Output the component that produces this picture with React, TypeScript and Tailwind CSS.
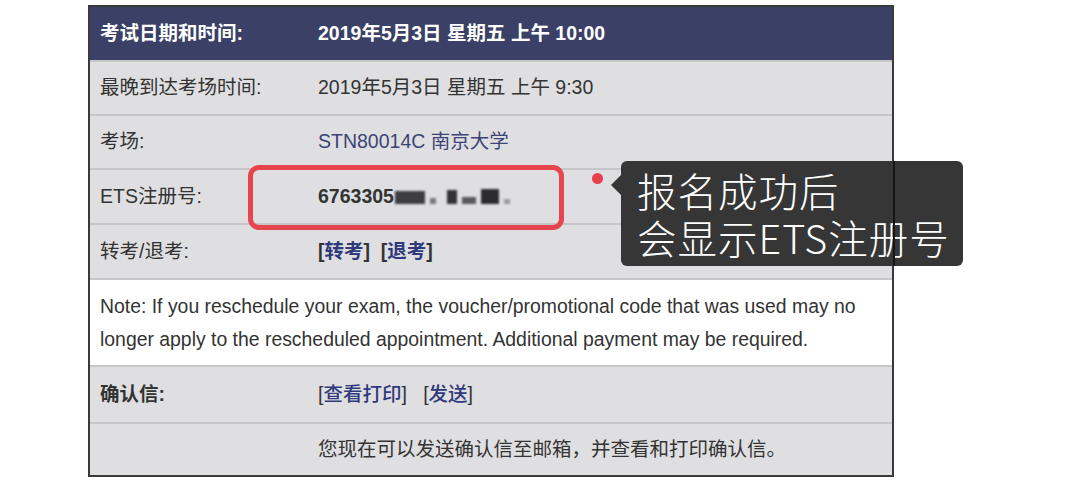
const FONT = { fontFamily: '"Liberation Sans", "Noto Sans CJK SC", sans-serif' };

function Row({ label, children, className = "", labelBold = false, h = "h-[54px]" }: { label?: string; children?: React.ReactNode; className?: string; labelBold?: boolean; h?: string }) {
  return (
    <div className={`grid grid-cols-[228px_1fr] items-center border-t-2 border-[#c6c6c9] bg-[#dfdfe1] ${h} ${className}`}>
      <div className={`pl-[10px] text-[#333] ${labelBold ? "font-bold" : ""}`}>{label}</div>
      <div className="text-[#333]">{children}</div>
    </div>
  );
}

function Link({ text }: { text: string }) {
  return (
    <span>
      [<span className="text-[#2f3a7c]" style={{ fontWeight: 500 }}>{text}</span>]
    </span>
  );
}

export default function App() {
  return (
    <div className="min-h-[485px] w-[1080px] bg-white pt-[5px]" style={FONT}>
      <div className="relative ml-[88px] w-[806px] border-2 border-[#3a3a3c] text-[19.5px]">
        <div className="grid h-[53px] grid-cols-[228px_1fr] items-center bg-[#3a4066] font-bold text-white">
          <div className="pl-[10px]">考试日期和时间:</div>
          <div>2019年5月3日 星期五 上午 10:00</div>
        </div>
        <Row label="最晚到达考场时间:" className="border-t-0">2019年5月3日 星期五 上午 9:30</Row>
        <Row label="考场:">
          <span className="text-[#3c4476]">STN80014C 南京大学</span>
        </Row>
        <Row label="ETS注册号:" h="h-[55px]">
          <span className="flex items-center">
            <span className="font-bold">6763305</span>
            <span className="ml-[1px] flex items-end gap-[5px] blur-[1px]">
              <span className="h-[13px] w-[30px] bg-[#3e3e40]" />
              <span className="h-[6px] w-[6px] bg-[#7a7a7e]" />
              <span className="ml-[6px] h-[14px] w-[10px] bg-[#333335]" />
              <span className="h-[7px] w-[14px] bg-[#5a5a5e]" />
              <span className="h-[15px] w-[18px] bg-[#2c2c2e]" />
              <span className="h-[5px] w-[6px] bg-[#9a9aa0]" />
            </span>
          </span>
        </Row>
        <Row label="转考/退考:" h="h-[55px]">
          <span className="font-bold">
            [<span className="text-[#2f3a7c]">转考</span>]&nbsp;&nbsp;[<span className="text-[#2f3a7c]">退考</span>]
          </span>
        </Row>
        <div className="h-[87px] border-t-2 border-[#c6c6c9] bg-white pl-[10px] pr-[6px] pt-[10px] text-[19.4px] leading-[33px] text-[#333]">
          Note: If you reschedule your exam, the voucher/promotional code that was used may no longer apply to the rescheduled appointment. Additional payment may be required.
        </div>
        <Row label="确认信:" labelBold h="h-[57px]">
          <Link text="查看打印" />&nbsp;&nbsp;&nbsp;<Link text="发送" />
        </Row>
        <Row h="h-[53px]">您现在可以发送确认信至邮箱，并查看和打印确认信。</Row>

        {/* highlight box */}
        <div className="absolute left-[158px] top-[158px] h-[65px] w-[316px] rounded-[11px] border-[5px] border-[#e6454e]" />
        <div className="absolute left-[502px] top-[166px] h-[11px] w-[11px] rounded-full bg-[#e6404b]" />

        {/* callout */}
        <div className="absolute left-[531px] top-[154px] h-[105px] w-[342px] rounded-[6px] bg-[#363637] pl-[16px] pt-[5px] text-[39.5px] leading-[47px] tracking-[1px] text-white" style={{ fontFamily: '"Noto Sans CJK SC", sans-serif', fontWeight: 300 }}>
          <div className="absolute left-[-10px] top-[14px] h-0 w-0 border-y-[10px] border-r-[10px] border-y-transparent border-r-[#363637]" />
          <div>报名成功后</div>
          <div>会显示ETS注册号</div>
          <div className="absolute left-[272px] top-0 h-full w-[2px] bg-[#151515]" />
        </div>
      </div>
    </div>
  );
}
